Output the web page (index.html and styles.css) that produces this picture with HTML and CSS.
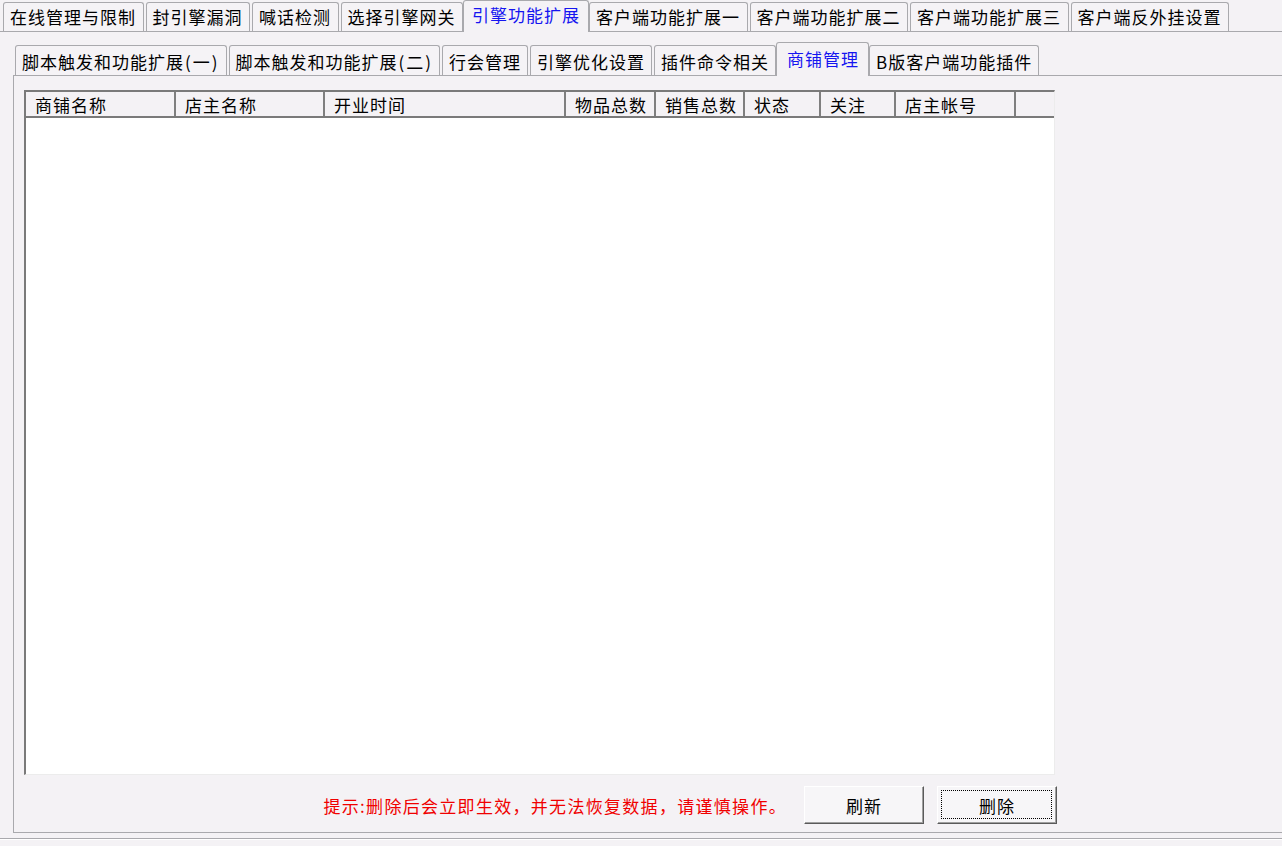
FILE: index.html
```html
<!DOCTYPE html>
<html lang="zh-CN">
<head>
<meta charset="utf-8">
<title>商铺管理</title>
<link rel="stylesheet" href="styles.css">
</head>
<body>
<div class="outer">
  <div class="tabs tabs-top">
    <div class="tab">在线管理与限制</div>
    <div class="tab">封引擎漏洞</div>
    <div class="tab">喊话检测</div>
    <div class="tab">选择引擎网关</div>
    <div class="tab active">引擎功能扩展</div>
    <div class="tab">客户端功能扩展一</div>
    <div class="tab">客户端功能扩展二</div>
    <div class="tab">客户端功能扩展三</div>
    <div class="tab">客户端反外挂设置</div>
  </div>
  <div class="panel-outer">
    <div class="tabs tabs-inner">
      <div class="tab">脚本触发和功能扩展<span class="p">(</span>一<span class="p">)</span></div>
      <div class="tab">脚本触发和功能扩展<span class="p">(</span>二<span class="p">)</span></div>
      <div class="tab">行会管理</div>
      <div class="tab">引擎优化设置</div>
      <div class="tab">插件命令相关</div>
      <div class="tab active">商铺管理</div>
      <div class="tab">B版客户端功能插件</div>
    </div>
    <div class="panel-inner">
      <div class="listview">
        <div class="lv-header">
          <div class="col c1">商铺名称</div>
          <div class="col c2">店主名称</div>
          <div class="col c3">开业时间</div>
          <div class="col c4">物品总数</div>
          <div class="col c5">销售总数</div>
          <div class="col c6">状态</div>
          <div class="col c7">关注</div>
          <div class="col c8">店主帐号</div>
          <div class="col filler"></div>
        </div>
        <div class="lv-body"></div>
      </div>
      <div class="footer">
        <span class="hint">提示:删除后会立即生效，并无法恢复数据，请谨慎操作。</span>
        <button class="btn">刷新</button>
        <button class="btn focused">删除</button>
      </div>
    </div>
  </div>
</div>
</body>
</html>
```

FILE: styles.css
```css
html, body {
  margin: 0;
  padding: 0;
}
body {
  width: 1282px;
  height: 846px;
  overflow: hidden;
  background: #f4f2f5;
  font-family: "Noto Sans CJK SC", "Noto Sans", sans-serif;
  font-size: 17px;
  letter-spacing: 1px;
  color: #000;
}
.outer {
  width: 1300px;
}
.tabs {
  display: flex;
  align-items: flex-end;
  gap: 2px;
}
.tab {
  box-sizing: border-box;
  display: flex;
  align-items: center;
  padding: 0 6px 0 6px;
  border: 1px solid #a9a9ad;
  border-bottom: none;
  border-radius: 3px 3px 0 0;
  background: #f5f3f6;
  white-space: nowrap;
  line-height: 1;
  position: relative;
}
.tab .p {
  padding: 0 1px;
}
.tab.active {
  color: #1515f0;
  background: #f4f2f5;
  margin: 0 -2px -1px -2px;
  padding: 0 8px;
  z-index: 2;
}
.tabs-top {
  height: 31px;
  padding-left: 3px;
}
.tabs-top .tab {
  height: 29px;
  padding-bottom: 2px;
  padding-right: 6.5px;
}
.tabs-top .tab.active {
  height: 32px;
  padding-bottom: 5px;
  padding-right: 8px;
}
.panel-outer {
  box-sizing: border-box;
  height: 808px;
  border-top: 1px solid #a9a9ad;
  border-bottom: 1px solid #a9a9ad;
  box-shadow: 0 1px 0 #ffffff;
  padding: 10px 0 0 13px;
}
.tabs-inner {
  height: 33px;
  padding-left: 2px;
}
.tabs-inner .tab {
  height: 30px;
  padding-top: 1px;
}
.tabs-inner .tab.active {
  height: 34px;
  padding: 0 9px 2px 10px;
}
.panel-inner {
  box-sizing: border-box;
  height: 758px;
  border-top: 1px solid #a9a9ad;
  border-left: 1px solid #a9a9ad;
  border-bottom: 1px solid #a9a9ad;
  padding: 14px 0 0 10px;
}
.listview {
  box-sizing: border-box;
  width: 1031px;
  height: 685px;
  border-top: 2px solid #7a7a7a;
  border-left: 2px solid #7a7a7a;
  border-right: 1px solid #ececec;
  border-bottom: 1px solid #ececec;
  background: #fff;
  display: flex;
  flex-direction: column;
}
.lv-header {
  display: flex;
  height: 24px;
  background: #f4f2f5;
  border-bottom: 2px solid #7a7a7a;
  flex: none;
}
.col {
  box-sizing: border-box;
  height: 100%;
  display: flex;
  align-items: center;
  padding-left: 9px;
  border-right: 2px solid #7f7f7f;
  white-space: nowrap;
  line-height: 1;
  padding-top: 1px;
}
.c1 { width: 150px; }
.c2 { width: 149px; }
.c3 { width: 241px; }
.c4 { width: 90px; }
.c5 { width: 89px; }
.c6 { width: 76px; }
.c7 { width: 75px; }
.c8 { width: 120px; }
.col.filler {
  flex: 1;
  border-right: none;
}
.lv-body {
  flex: 1;
  background: #fff;
}
.footer {
  width: 1033px;
  display: flex;
  justify-content: flex-end;
  align-items: center;
  margin-top: 11px;
}
.hint {
  color: #f00000;
  letter-spacing: 1.3px;
  margin-right: 17px;
  white-space: nowrap;
}
.btn {
  box-sizing: border-box;
  position: relative;
  width: 120px;
  height: 38px;
  font: inherit;
  letter-spacing: 1px;
  color: #000;
  background: #f7f6f8;
  border: 1px solid;
  border-color: #ffffff #5a5a5a #5a5a5a #ffffff;
  box-shadow: inset -1px -1px 0 #a0a0a0;
  padding: 0;
  margin: 0;
}
.btn + .btn {
  margin-left: 13px;
}
.btn.focused::after {
  content: "";
  position: absolute;
  left: 3px;
  top: 3px;
  right: 4px;
  bottom: 4px;
  border: 1px dotted #000;
}
```
